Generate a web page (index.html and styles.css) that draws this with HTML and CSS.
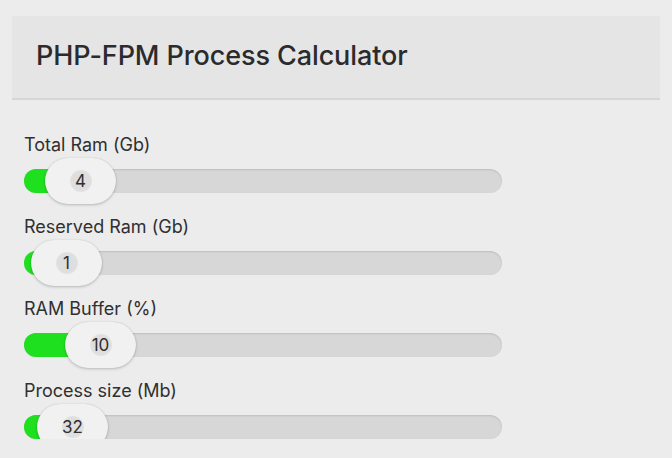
FILE: index.html
```html
<!DOCTYPE html>
<html>
<head>
<meta charset="utf-8">
<link rel="stylesheet" href="styles.css">
</head>
<body>
<div class="header"><h1 class="title">PHP-FPM Process Calculator</h1></div>
<div class="form">
  <div class="field">
    <div class="label">Total Ram (Gb)</div>
    <div class="track"><div class="fill" style="width:50px"></div><div class="thumb" style="left:21px"><span class="val">4</span></div></div>
  </div>
  <div class="field">
    <div class="label">Reserved Ram (Gb)</div>
    <div class="track"><div class="fill" style="width:36px"></div><div class="thumb" style="left:7px"><span class="val">1</span></div></div>
  </div>
  <div class="field">
    <div class="label">RAM Buffer (%)</div>
    <div class="track"><div class="fill" style="width:70px"></div><div class="thumb" style="left:41px"><span class="val">10</span></div></div>
  </div>
  <div class="field">
    <div class="label">Process size (Mb)</div>
    <div class="track"><div class="fill" style="width:42px"></div><div class="thumb" style="left:13px"><span class="val">32</span></div></div>
  </div>
</div>
</body>
</html>
```
FILE: styles.css
```css
html, body { margin: 0; padding: 0; }
body {
  background: #ececec;
  font-family: Inter, "Liberation Sans", sans-serif;
  color: #2a2a2c;
}
.header {
  margin: 16px 12px 0;
  height: 82px;
  background: #e5e5e5;
  border-bottom: 2px solid #d6d6d6;
  display: flex;
  align-items: center;
  padding-left: 24px;
  padding-bottom: 3px;
  box-sizing: border-box;
  height: 84px;
}
.title {
  margin: 0;
  font-size: 27px;
  font-weight: 500;
  letter-spacing: -0.1px;
  color: #2b2b2d;
}
.form {
  padding: 34px 24px 0;
  display: flex;
  flex-direction: column;
  gap: 23px;
}
.field { display: flex; flex-direction: column; gap: 13px; }
.label { font-size: 18px; line-height: 22px; color: #303030; }
.track {
  position: relative;
  width: 478px;
  height: 24px;
  border-radius: 12px;
  background: #d7d7d7;
  box-shadow: inset 0 1px 2px rgba(0,0,0,0.12);
}
.fill {
  height: 100%;
  border-radius: 12px;
  background: #1fe01f;
}
.thumb {
  position: absolute;
  top: -11px;
  width: 71px;
  height: 46px;
  border-radius: 23px;
  background: #f1f1f1;
  box-shadow: 0 1px 3px rgba(0,0,0,0.22), 0 0 1px rgba(0,0,0,0.15);
  display: flex;
  align-items: center;
  justify-content: center;
}
.val {
  min-width: 22px;
  height: 22px;
  border-radius: 11px;
  background: radial-gradient(circle, #dedede 55%, #e8e8e8 100%);
  display: flex;
  align-items: center;
  justify-content: center;
  font-size: 17px;
  color: #2f2f2f;
}
```
